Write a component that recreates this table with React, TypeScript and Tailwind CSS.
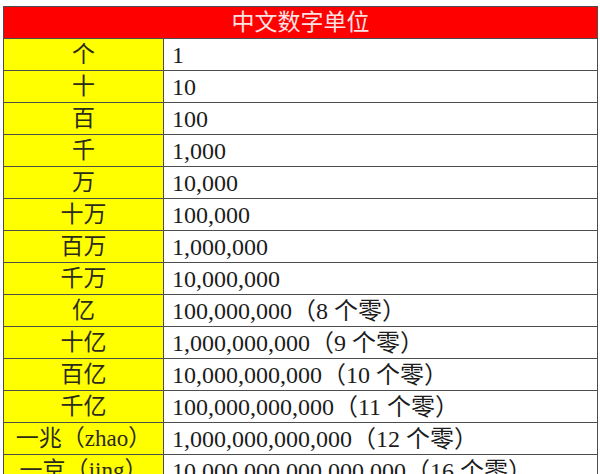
const rows: [string, string][] = [
  ["个", "1"],
  ["十", "10"],
  ["百", "100"],
  ["千", "1,000"],
  ["万", "10,000"],
  ["十万", "100,000"],
  ["百万", "1,000,000"],
  ["千万", "10,000,000"],
  ["亿", "100,000,000（8 个零）"],
  ["十亿", "1,000,000,000（9 个零）"],
  ["百亿", "10,000,000,000（10 个零）"],
  ["千亿", "100,000,000,000（11 个零）"],
  ["一兆（zhao）", "1,000,000,000,000（12 个零）"],
  ["一京（jing）", "10,000,000,000,000,000（16 个零）"],
];

const App = () => {
  return (
    <div
      className="bg-white h-[474px] w-[600px] overflow-hidden pt-[6px] pl-[3px]"
      style={{ fontFamily: '"Liberation Serif", "Noto Sans CJK SC", serif' }}
    >
      <div className="w-[595px] border-t border-l border-r border-[#4d4d4d]">
        <div className="h-[32px] bg-[#fe0000] border-b border-[#4d4d4d] flex items-center justify-center text-[23px] text-[#fbe3e3] leading-none">
          中文数字单位
        </div>
        {rows.map(([unit, value]) => (
          <div key={unit} className="flex h-[32px] border-b border-[#4d4d4d]">
            <div className="w-[160px] bg-[#ffff00] border-r border-[#4d4d4d] flex items-center justify-center text-[23px] text-[#2b2b1a] leading-none whitespace-nowrap">
              {unit}
            </div>
            <div className="flex-1 flex items-center pl-[8px] text-[24px] text-[#1c1c1c] leading-none whitespace-nowrap">
              {value}
            </div>
          </div>
        ))}
      </div>
    </div>
  );
};

export default App;
